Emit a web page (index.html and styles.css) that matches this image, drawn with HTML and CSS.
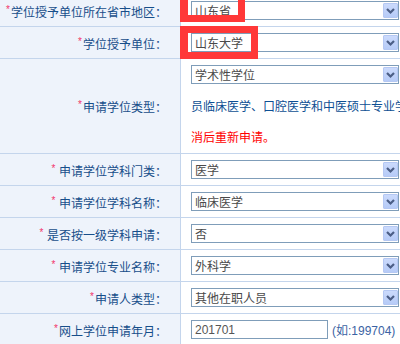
FILE: index.html
```html
<!DOCTYPE html>
<html lang="zh-CN">
<head>
    <meta charset="UTF-8">
    <title>学位申请</title>
    <link rel="stylesheet" href="styles.css">
</head>
<body>
    <table class="form">
        <tr>
            <td class="label"><em>*</em>学位授予单位所在省市地区：</td>
            <td class="field">
                <div class="select"><span>山东省</span><i class="arrow"><svg width="15" height="15" viewBox="0 0 15 15"><polyline points="4,6 7.5,9.5 11,6" fill="none" stroke="#4b5e86" stroke-width="2.2"/></svg></i></div>
            </td>
        </tr>
        <tr>
            <td class="label"><em>*</em>学位授予单位：</td>
            <td class="field">
                <div class="select"><span>山东大学</span><i class="arrow"><svg width="15" height="15" viewBox="0 0 15 15"><polyline points="4,6 7.5,9.5 11,6" fill="none" stroke="#4b5e86" stroke-width="2.2"/></svg></i></div>
            </td>
        </tr>
        <tr>
            <td class="label"><em>*</em>申请学位类型：</td>
            <td class="field">
                <div class="select"><span>学术性学位</span><i class="arrow"><svg width="15" height="15" viewBox="0 0 15 15"><polyline points="4,6 7.5,9.5 11,6" fill="none" stroke="#4b5e86" stroke-width="2.2"/></svg></i></div>
                <div class="note">员临床医学、口腔医学和中医硕士专业学</div>
                <div class="warn">消后重新申请。</div>
            </td>
        </tr>
        <tr>
            <td class="label"><em>*</em> 申请学位学科门类：</td>
            <td class="field">
                <div class="select"><span>医学</span><i class="arrow"><svg width="15" height="15" viewBox="0 0 15 15"><polyline points="4,6 7.5,9.5 11,6" fill="none" stroke="#4b5e86" stroke-width="2.2"/></svg></i></div>
            </td>
        </tr>
        <tr>
            <td class="label"><em>*</em> 申请学位学科名称：</td>
            <td class="field">
                <div class="select"><span>临床医学</span><i class="arrow"><svg width="15" height="15" viewBox="0 0 15 15"><polyline points="4,6 7.5,9.5 11,6" fill="none" stroke="#4b5e86" stroke-width="2.2"/></svg></i></div>
            </td>
        </tr>
        <tr>
            <td class="label"><em>*</em> 是否按一级学科申请：</td>
            <td class="field">
                <div class="select"><span>否</span><i class="arrow"><svg width="15" height="15" viewBox="0 0 15 15"><polyline points="4,6 7.5,9.5 11,6" fill="none" stroke="#4b5e86" stroke-width="2.2"/></svg></i></div>
            </td>
        </tr>
        <tr>
            <td class="label"><em>*</em> 申请学位专业名称：</td>
            <td class="field">
                <div class="select"><span>外科学</span><i class="arrow"><svg width="15" height="15" viewBox="0 0 15 15"><polyline points="4,6 7.5,9.5 11,6" fill="none" stroke="#4b5e86" stroke-width="2.2"/></svg></i></div>
            </td>
        </tr>
        <tr>
            <td class="label"><em>*</em>申请人类型：</td>
            <td class="field">
                <div class="select"><span>其他在职人员</span><i class="arrow"><svg width="15" height="15" viewBox="0 0 15 15"><polyline points="4,6 7.5,9.5 11,6" fill="none" stroke="#4b5e86" stroke-width="2.2"/></svg></i></div>
            </td>
        </tr>
        <tr>
            <td class="label"><em>*</em>网上学位申请年月：</td>
            <td class="field">
                <div class="inline"><input type="text" class="text" value="201701"><span class="hint">(如:199704)</span></div>
            </td>
        </tr>
    </table>
    <div class="mark mark-1"></div>
    <div class="mark mark-2"></div>
</body>
</html>
```

FILE: styles.css
```css
body {
    margin: 0;
    background: #fff;
    font-family: "Noto Sans CJK SC", "Liberation Sans", sans-serif;
    font-size: 12px;
    overflow: hidden;
    position: relative;
}
.form {
    width: 400px;
    margin-top: -5px;
    table-layout: fixed;
    border-collapse: separate;
    border-spacing: 0;
}
.form td {
    border-bottom: 1px solid #c4d5ec;
    padding: 0;
}
.label {
    width: 167px;
    padding-right: 13px !important;
    background: #eef3fb;
    border-right: 1px solid #c4d5ec;
    color: #174e8a;
    text-align: right;
    vertical-align: middle;
    white-space: nowrap;
    line-height: 16px;
}
.label em {
    font-style: normal;
    font-family: "Liberation Sans", sans-serif;
    font-size: 10px;
    color: #f2356a;
    vertical-align: 4px;
    margin-right: 1px;
}
.field {
    padding: 6px 0 6px 10px !important;
    vertical-align: top;
    overflow: hidden;
}
.select {
    width: 208px;
    height: 19px;
    box-sizing: border-box;
    border: 1px solid #7f9db9;
    background: #fff;
    display: flex;
    align-items: center;
    justify-content: space-between;
    color: #4a4a4a;
}
.select span {
    padding-left: 3px;
    line-height: 17px;
}
.arrow {
    width: 15px;
    height: 15px;
    box-sizing: border-box;
    border: 1px solid #b5c8f3;
    border-radius: 1px;
    background: linear-gradient(#cbdafc, #b6cbf7);
    display: flex;
    align-items: center;
    justify-content: center;
}
.arrow svg {
    display: block;
    margin: -1px;
}
.note {
    margin-top: 12px;
    line-height: 20px;
    color: #0e4f93;
    white-space: nowrap;
}
.warn {
    margin-top: 11px;
    line-height: 20px;
    color: #ff0000;
    white-space: nowrap;
}
.inline {
    display: flex;
    align-items: center;
    gap: 4px;
    white-space: nowrap;
}
.text {
    width: 137px;
    height: 19px;
    box-sizing: border-box;
    margin: 0;
    padding: 0 3px;
    border: 1px solid #7f9db9;
    font-family: "Liberation Sans", sans-serif;
    font-size: 12px;
    color: #555;
    outline: none;
}
.hint {
    font-family: "Liberation Sans", "Noto Sans CJK SC", sans-serif;
    color: #3b63a3;
}
.mark {
    position: absolute;
    left: 180px;
    box-sizing: border-box;
    border: 7px solid #ff3838;
    border-left-width: 8px;
}
.mark-1 {
    top: -10px;
    width: 65px;
    height: 32px;
}
.mark-2 {
    top: 26px;
    width: 78px;
    height: 33px;
}
```
